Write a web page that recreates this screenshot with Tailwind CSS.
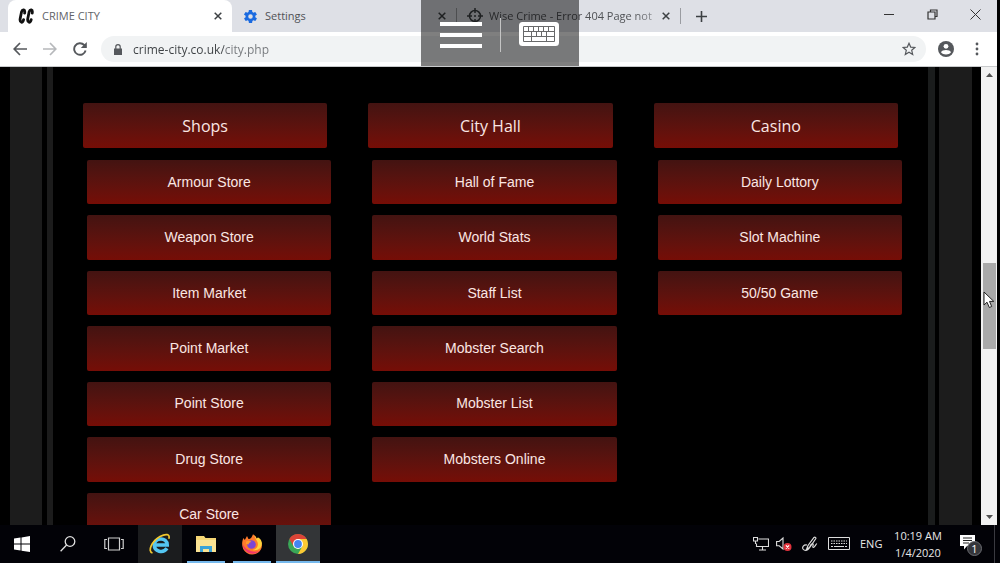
<!DOCTYPE html>
<html lang="en">
<head>
<meta charset="utf-8">
<title>CRIME CITY</title>
<script src="https://cdn.jsdelivr.net/npm/@tailwindcss/browser@4"></script>
</head>
<body class="flex h-screen flex-col overflow-hidden bg-black font-['Open_Sans','Noto_Sans',sans-serif]">

<!-- Browser window -->
<div class="relative mr-[3px] flex min-h-0 flex-1 flex-col">
  <!-- Tab strip -->
  <div class="flex h-8 shrink-0 items-stretch bg-[#dee0e6] pl-2 text-[11px] text-[#505256]">
    <div class="flex w-56 items-center rounded-t-lg bg-white pr-[6px] pl-[10px]">
      <svg class="mr-2 h-4 w-4" viewBox="0 0 16 16" fill="none" stroke="#111" stroke-width="2.800" stroke-linecap="round"><path d="M6.600 5.200C7.400 1.200 4.500 .8 3.500 4L2.200 10.500C1.400 15 4.800 15.500 5.600 11.600"/><path d="M14.200 5.200C15 1.200 12.100 .8 11.100 4L9.800 10.500C9 15 12.400 15.500 13.200 11.600"/></svg>
      <span class="flex-1 text-[#5f6368]">CRIME CITY</span>
      <button aria-label="Close tab" class="grid h-4 w-4 place-items-center"><svg class="h-2 w-2" viewBox="0 0 8 8" stroke="#3c4043" stroke-width="1.500"><path d="M.7.7l6.600 6.600M7.300.7L.7 7.300"/></svg></button>
    </div>
    <div class="flex w-[224px] items-center pr-[6px] pl-3">
      <svg class="mr-2 h-[13px] w-[13px]" viewBox="2 2 20 20" fill="#1a6ae0"><path d="M19.400 13c0-.3.100-.6.100-1s0-.7-.1-1l2.100-1.600a.5.5 0 0 0 .1-.7l-2-3.400a.5.5 0 0 0-.6-.2l-2.500 1a7.300 7.300 0 0 0-1.700-1l-.4-2.600a.5.5 0 0 0-.5-.5h-4a.5.5 0 0 0-.5.500l-.4 2.600a7.700 7.700 0 0 0-1.700 1l-2.500-1a.5.5 0 0 0-.6.200l-2 3.400a.5.5 0 0 0 .1.700L4.500 11a8 8 0 0 0 0 2l-2.100 1.600a.5.5 0 0 0-.1.700l2 3.400c.1.200.4.300.6.200l2.500-1c.5.400 1.100.7 1.700 1l.4 2.600c0 .3.200.5.500.5h4c.3 0 .5-.2.500-.5l.4-2.600a7 7 0 0 0 1.700-1l2.500 1c.2.100.5 0 .6-.2l2-3.400a.5.5 0 0 0-.1-.7zM12 15.500a3.500 3.500 0 1 1 0-7 3.500 3.500 0 0 1 0 7z"/></svg>
      <span class="flex-1">Settings</span>
      <button aria-label="Close tab" class="grid h-4 w-4 place-items-center"><svg class="h-2 w-2" viewBox="0 0 8 8" stroke="#3c4043" stroke-width="1.500"><path d="M.7.7l6.600 6.600M7.300.7L.7 7.300"/></svg></button>
    </div>
    <div class="my-2 w-px bg-[#9a9ca1]"></div>
    <div class="flex w-[223px] items-center pr-[6px] pl-[10px]">
      <svg class="mr-[6px] h-4 w-4 shrink-0" viewBox="0 0 16 16" fill="none" stroke="#3c4043" stroke-width="1.500"><circle cx="8" cy="8" r="5.500"/><path d="M8 0v5M8 11v5M0 8h5M11 8h5"/><circle cx="8" cy="8" r="1" fill="#3c4043" stroke="none"/></svg>
      <span class="flex-1 mask-r-from-85% mask-r-to-110% whitespace-nowrap">Wise Crime - Error 404 Page not</span>
      <button aria-label="Close tab" class="grid h-4 w-4 place-items-center"><svg class="h-2 w-2" viewBox="0 0 8 8" stroke="#3c4043" stroke-width="1.500"><path d="M.7.7l6.600 6.600M7.300.7L.7 7.300"/></svg></button>
    </div>
    <div class="my-2 w-px bg-[#9a9ca1]"></div>
    <button aria-label="New tab" class="ml-[10px] grid w-5 place-items-center"><svg class="h-[11px] w-[11px]" viewBox="0 0 11 11" stroke="#3c4043" stroke-width="1.600"><path d="M5.500 0v11M0 5.500h11"/></svg></button>
    <div class="ml-auto flex items-center gap-[23px] pr-4 pb-1">
      <button aria-label="Minimize" class="grid h-5 w-5 place-items-center"><svg class="h-[10px] w-[10px]" viewBox="0 0 10 10" stroke="#333" fill="none"><path d="M0 5.500h10"/></svg></button>
      <button aria-label="Restore" class="grid h-5 w-5 place-items-center"><svg class="h-[11px] w-[11px]" viewBox="0 0 11 11" stroke="#333" stroke-width="1.200" fill="none"><path d="M1 3h7v7H1zM3.500 3V1H10v6.500H8"/></svg></button>
      <button aria-label="Close" class="-mr-1 grid h-5 w-5 place-items-center"><svg class="h-[11px] w-[11px]" viewBox="0 0 11 11" stroke="#333" fill="none"><path d="M.5.5l10 10M10.500.5l-10 10"/></svg></button>
    </div>
  </div>

  <!-- Toolbar -->
  <div class="flex h-[35px] shrink-0 items-center border-b border-[#c8cacc] bg-white">
    <div class="flex w-[101px] items-center gap-4 pl-[13px]">
      <button aria-label="Back"><svg class="h-[14px] w-[14px]" viewBox="0 0 14 14" fill="none" stroke="#55585c" stroke-width="1.700"><path d="M14 7H1.500M7 1L1.200 7 7 13"/></svg></button>
      <button aria-label="Forward"><svg class="h-[14px] w-[14px]" viewBox="0 0 14 14" fill="none" stroke="#b6b8bb" stroke-width="1.700"><path d="M0 7h12.500M7 1l5.800 6L7 13"/></svg></button>
      <button aria-label="Reload"><svg class="h-[14px] w-[14px]" viewBox="0 0 14 14" fill="none" stroke="#55585c" stroke-width="1.900"><path d="M12.600 8.500A5.800 5.800 0 1 1 11.200 3l1.500 1.600"/><path d="M13.800 0v6H7.800z" fill="#55585c" stroke="none"/></svg></button>
    </div>
    <div class="flex h-[26px] flex-1 items-center rounded-full bg-[#f1f3f4] pr-[10px] pl-3">
      <svg class="mr-[10px] h-[11px] w-[10px]" viewBox="0 0 10 11"><path d="M1 4.500h8V11H1z" fill="#55585c"/><path d="M2.800 5V2.800a2.200 2.200 0 0 1 4.400 0V5" fill="none" stroke="#55585c" stroke-width="1.200"/></svg>
      <input aria-label="Address" class="h-5 flex-1 bg-linear-to-r from-[#3c4043] from-[91px] to-[#74777b] to-[91px] bg-clip-text text-[12px] font-medium text-transparent outline-none" value="crime-city.co.uk/city.php">
      <button aria-label="Bookmark"><svg class="h-[14px] w-[14px]" viewBox="0 0 14 14" fill="none" stroke="#55585c" stroke-width="1.200"><path d="M7 1.300l1.700 3.800 4.200.4-3.200 2.800 1 4.100L7 10.200l-3.700 2.200 1-4.100L1.100 5.500l4.200-.4z"/></svg></button>
    </div>
    <div class="flex w-[71px] items-center justify-between pr-[16px] pl-3">
      <button aria-label="Profile"><svg class="h-4 w-4" viewBox="0 0 16 16"><circle cx="8" cy="8" r="8" fill="#55585c"/><circle cx="8" cy="5.300" r="2.400" fill="#fff"/><path d="M3 11.200c1-3 9-3 10 0-2 3-8 3-10 0z" fill="#fff"/></svg></button>
      <button aria-label="Menu"><svg class="h-[14px] w-2" viewBox="0 0 8 14" fill="#55585c"><circle cx="4" cy="2" r="1.400"/><circle cx="4" cy="7" r="1.400"/><circle cx="4" cy="12" r="1.400"/></svg></button>
    </div>
  </div>

  <!-- Page -->
  <div class="flex min-h-0 flex-1 overflow-hidden bg-black pl-[10px]">
    <div class="w-8 bg-[#1c1c1c]"></div>
    <div class="ml-[5px] w-[6px] bg-[#1c1c1c]"></div>
    <main class="grid flex-1 grid-cols-3 content-start gap-[41px] px-[30px] pt-9 text-center text-[14px] text-[#fbe6e3]">
      <section>
        <h2 class="mb-3 h-[45px] rounded-xs bg-linear-to-b from-[#431311] to-[#760d06] text-[16px] leading-[46px] font-medium">Shops</h2>
        <nav class="-mr-1 ml-1 grid h-[377px] grid-rows-7 gap-[11px] font-['Liberation_Sans',Arial,sans-serif]">
          <a href="#" class="flex items-center justify-center rounded-xs bg-linear-to-b from-[#431311] to-[#760d06]">Armour Store</a>
          <a href="#" class="flex items-center justify-center rounded-xs bg-linear-to-b from-[#431311] to-[#760d06]">Weapon Store</a>
          <a href="#" class="flex items-center justify-center rounded-xs bg-linear-to-b from-[#431311] to-[#760d06]">Item Market</a>
          <a href="#" class="flex items-center justify-center rounded-xs bg-linear-to-b from-[#431311] to-[#760d06]">Point Market</a>
          <a href="#" class="flex items-center justify-center rounded-xs bg-linear-to-b from-[#431311] to-[#760d06]">Point Store</a>
          <a href="#" class="flex items-center justify-center rounded-xs bg-linear-to-b from-[#431311] to-[#760d06]">Drug Store</a>
          <a href="#" class="flex items-center justify-center rounded-xs bg-linear-to-b from-[#431311] to-[#760d06]">Car Store</a>
        </nav>
      </section>
      <section>
        <h2 class="mb-3 h-[45px] rounded-xs bg-linear-to-b from-[#431311] to-[#760d06] text-[16px] leading-[46px] font-medium">City Hall</h2>
        <nav class="-mr-1 ml-1 grid h-[377px] grid-rows-7 gap-[11px] font-['Liberation_Sans',Arial,sans-serif]">
          <a href="#" class="flex items-center justify-center rounded-xs bg-linear-to-b from-[#431311] to-[#760d06]">Hall of Fame</a>
          <a href="#" class="flex items-center justify-center rounded-xs bg-linear-to-b from-[#431311] to-[#760d06]">World Stats</a>
          <a href="#" class="flex items-center justify-center rounded-xs bg-linear-to-b from-[#431311] to-[#760d06]">Staff List</a>
          <a href="#" class="flex items-center justify-center rounded-xs bg-linear-to-b from-[#431311] to-[#760d06]">Mobster Search</a>
          <a href="#" class="flex items-center justify-center rounded-xs bg-linear-to-b from-[#431311] to-[#760d06]">Mobster List</a>
          <a href="#" class="flex items-center justify-center rounded-xs bg-linear-to-b from-[#431311] to-[#760d06]">Mobsters Online</a>
        </nav>
      </section>
      <section>
        <h2 class="mb-3 h-[45px] rounded-xs bg-linear-to-b from-[#431311] to-[#760d06] text-[16px] leading-[46px] font-medium">Casino</h2>
        <nav class="-mr-1 ml-1 grid h-[377px] grid-rows-7 gap-[11px] font-['Liberation_Sans',Arial,sans-serif]">
          <a href="#" class="flex items-center justify-center rounded-xs bg-linear-to-b from-[#431311] to-[#760d06]">Daily Lottory</a>
          <a href="#" class="flex items-center justify-center rounded-xs bg-linear-to-b from-[#431311] to-[#760d06]">Slot Machine</a>
          <a href="#" class="flex items-center justify-center rounded-xs bg-linear-to-b from-[#431311] to-[#760d06]">50/50 Game</a>
        </nav>
      </section>
    </main>
    <div class="mr-1 w-[7px] bg-[#1a1c1c]"></div>
    <div class="mr-[9px] w-[33px] bg-[#1c1c1c]"></div>
    <!-- Scrollbar -->
    <div class="flex w-4 flex-col items-center justify-between bg-[#f1f1f1] py-[6px]">
      <svg class="h-1 w-[7px]" viewBox="0 0 7 4" fill="#505050"><path d="M0 4h7L3.500 0z"/></svg>
      <div class="relative mt-5 h-[86px] w-[13px] bg-[#a9a9a9]">
        <svg class="absolute top-7 left-0 h-[18px] w-3" viewBox="0 0 12 18" fill="#fff" stroke="#222"><path d="M1 1v13l3-2.800 2.300 5.300 2.400-1L6.500 10.400h4.300z"/></svg>
      </div>
      <svg class="h-1 w-[7px]" viewBox="0 0 7 4" fill="#505050"><path d="M0 0h7L3.500 4z"/></svg>
    </div>
  </div>

  <!-- Remote session controls, floating over the window -->
  <div class="absolute top-0 left-[421px] flex h-[66px] w-[158px] bg-black/50">
    <button aria-label="Session menu" class="mt-[22px] ml-[19px] flex h-[26px] w-[42px] flex-col justify-between">
      <span class="h-1 w-full bg-white"></span><span class="h-1 w-full bg-white"></span><span class="h-1 w-full bg-white"></span>
    </button>
    <span class="mt-[18px] ml-[18px] h-[34px] w-px bg-[#c4c4c4]"></span>
    <button aria-label="Keyboard" class="mt-[22px] ml-[18px] h-6 w-10">
      <svg class="h-6 w-10" viewBox="0 0 40 24" fill="none" stroke="#68696a"><rect width="40" height="24" rx="3.500" fill="#fff" stroke="none"/><path d="M4.500 4.500h31v15h-31zM4.500 9.500h31M4.500 14.500h31M9.500 4.500v5M14.500 4.500v5M19.500 4.500v5M24.500 4.500v5M29.500 4.500v5M12.500 9.500v10M17.500 9.500v5M22.500 9.500v5M27.500 9.500v10"/></svg>
    </button>
  </div>
</div>

<!-- Taskbar -->
<footer class="flex h-[38px] shrink-0 items-stretch bg-[#020207] pr-[5px] text-[#e8e8e8]">
  <div class="flex flex-1 gap-[2px]">
    <button aria-label="Start" class="grid w-11 place-items-center"><svg class="h-4 w-4" viewBox="0 0 16 16" fill="#fff"><path d="M0 2.500l6.500-1v6H0zM7.500 1.400L16 0v7.500H7.500zM0 8.500h6.500v6L0 13.600zM7.500 8.500H16V16l-8.500-1.300z"/></svg></button>
    <button aria-label="Search" class="grid w-11 place-items-center"><svg class="h-4 w-4" viewBox="0 0 16 16" fill="none" stroke="#e0e0e0" stroke-width="1.300"><circle cx="10" cy="5.500" r="4.800"/><path d="M6.600 9L.6 15.200"/></svg></button>
    <button aria-label="Task view" class="grid w-11 place-items-center"><svg class="h-4 w-5" viewBox="0 0 20 16" fill="none" stroke="#d0d0d0" stroke-width="1.200"><path d="M4.500 2h11v12h-11zM3 3.500H.8v9H3M17 3.500h2.200v9H17"/></svg></button>
    <button aria-label="Internet Explorer" class="grid w-11 place-items-center bg-[#1b1c1e]"><svg class="h-[22px] w-[22px]" viewBox="0 0 22 22" fill="none"><path d="M18 15.300C14 21 5.300 18.500 5.300 12 5.300 4.500 18.200 3.500 18.200 12H6" stroke="#54c6f2" stroke-width="3.600"/><path d="M3.500 20C-2 18.500 3 8 11 3.500 17 .3 21.500 1 19.800 5.800" stroke="#f2c72e" stroke-width="1.700"/></svg></button>
    <button aria-label="File Explorer" class="relative grid w-11 place-items-center"><svg class="h-[18px] w-5" viewBox="0 0 20 18"><path d="M0 1h8l1.500 2H20v14H0z" fill="#f5d675"/><path d="M0 5h20v12H0z" fill="#fbe394"/><path d="M4 17v-6h12v6h-3v-3H7v3z" fill="#3ba3d8"/></svg><span class="absolute inset-x-[3px] bottom-0 h-[2px] bg-[#76b9ed]"></span></button>
    <button aria-label="Firefox" class="relative grid w-11 place-items-center"><svg class="h-[22px] w-[22px]" viewBox="0 0 22 22"><path d="M2.500 5l1.300 2L6 3l1.500 3c2-.2 3-1 4.500-4.800 2 1.200 3.200 3 3.600 4.500L17 4.500c3.500 3 5 8 3 11.800C16 23.500 5.500 23 2.200 16 .5 12 1 8 2.500 5z" fill="#ff7a2b"/><path d="M12 1.200c2 1.500 2.500 4.500 3.500 6 3 4 1 9-4 9.800 6 1.500 10-3 9.300-7.500-.4-2.500-2-4.300-3.800-5l-1.400 1.200c-.4-1.500-1.600-3.300-3.600-4.500z" fill="#ffd33c"/><path d="M1.500 11c1 9 11 13 17.500 6.500C14 20.500 5 18 1.500 11z" fill="#f0356b"/><circle cx="10.500" cy="11.500" r="4.300" fill="#7b46d6"/><path d="M5 8.500c2-1.300 4-.8 5.500.5-2 .2-2.600 1-3 2.500L5 11z" fill="#ff9a2e"/></svg><span class="absolute inset-x-[3px] bottom-0 h-[2px] bg-[#76b9ed]"></span></button>
    <button aria-label="Chrome" class="relative grid w-11 place-items-center bg-[#333537]"><svg class="h-5 w-5" viewBox="0 0 20 20"><circle cx="10" cy="10" r="10" fill="#3aa757"/><path d="M1.340 5A10 10 0 0 1 18.660 5H10L5.700 12.500z" fill="#dc4437"/><path d="M18.660 5A10 10 0 0 1 10 20l4.300-7.500L10 5z" fill="#fcc934"/><circle cx="10" cy="10" r="5" fill="#fff"/><circle cx="10" cy="10" r="3.900" fill="#4285f4"/></svg><span class="absolute inset-x-0 bottom-0 h-[2px] bg-[#76b9ed]"></span></button>
  </div>
  <div class="flex items-center text-[11px]">
    <svg class="mr-[7px] h-[14px] w-4" viewBox="0 0 16 14" fill="none" stroke="#ddd" stroke-width="1.100"><path d="M5.500 2h10v7.500h-12V6.500M9.500 9.500v3M6 13h7"/><path d="M.5.500h4v3.500h-4zM2.500 4v3"/></svg>
    <svg class="mr-[10px] h-4 w-4" viewBox="0 0 16 16"><path d="M.6 5.500h2.600L7 2v11L3.200 9.800H.6z" fill="none" stroke="#ddd" stroke-width="1.100"/><circle cx="11.500" cy="11" r="4" fill="#e0323c"/><path d="M9.900 9.400l3.200 3.200M13.100 9.400l-3.200 3.200" stroke="#fff" stroke-width="1.100"/></svg>
    <svg class="mr-[10px] h-4 w-4" viewBox="0 0 16 16" fill="none" stroke="#ddd" stroke-width="1.200"><path d="M4.500 13.500L6 9.500 12 1.500c1-1 2.300.2 1.700 1.300L8 11zM5 9C1.500 8.500 0 11 1 13c1.500 2 4.500 2 6-.5 1-1.800 2.500-6 4-4.500.8 1-1 3 .2 3.500 1 .4 2-2 3.600-4"/></svg>
    <svg class="mr-[10px] h-[14px] w-[22px]" viewBox="0 0 22 14" fill="none" stroke="#ddd"><path d="M.5.5h21v12H.5z"/><path d="M3 4h16M3 6.500h16" stroke-dasharray="1.500 1" stroke-width="1.200"/><path d="M3 9.500h2M6 9.500h10M17 9.500h2"/></svg>
    <span class="w-[25px]">ENG</span>
    <div class="ml-[9px] w-[48px] text-center leading-[17px] whitespace-nowrap"><div>10:19 AM</div><div>1/4/2020</div></div>
    <button aria-label="Notifications" class="ml-[17px] h-6 w-6"><svg class="h-6 w-6" viewBox="0 0 24 24"><path d="M1 3h15v11H8l-3 3.500V14H1z" fill="#fff"/><path d="M4 6h9M4 8.500h9M4 11h6" stroke="#222"/><circle cx="15.500" cy="16.500" r="7" fill="#34353a" stroke="#6a6b70"/><text x="15.500" y="20.500" font-size="11" fill="#fff" text-anchor="middle">1</text></svg></button>
    <div class="ml-[11px] h-[38px] w-px bg-[#3a3a40]"></div>
  </div>
</footer>
</body>
</html>
